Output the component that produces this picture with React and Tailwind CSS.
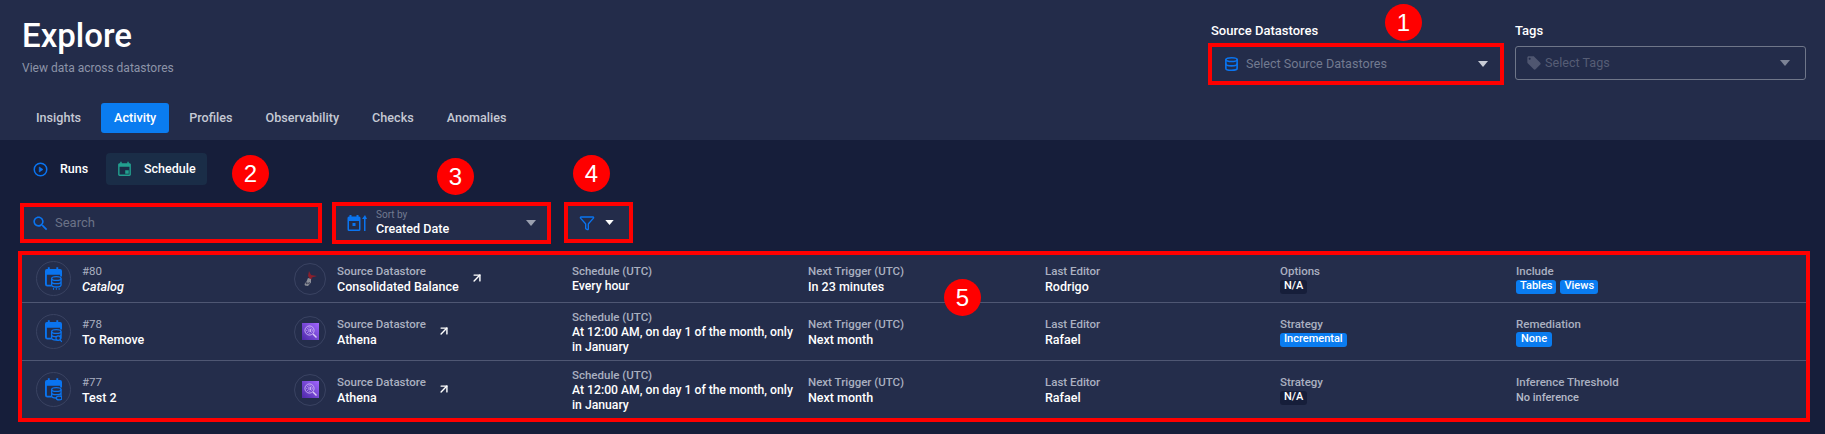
import { ArrowUpRight, Database, Funnel } from "lucide-react";

const tabs = ["Insights", "Activity", "Profiles", "Observability", "Checks", "Anomalies"];

const rows = [
  {
    id: "#80",
    name: "Catalog",
    italic: true,
    logo: "bird",
    store: "Consolidated Balance",
    schedule: "Every hour",
    next: "In 23 minutes",
    editor: "Rodrigo",
    optLabel: "Options",
    opts: [{ text: "N/A", dark: true }],
    lastLabel: "Include",
    last: ["Tables", "Views"],
    h: "h-[47px]",
    badge: "scan",
  },
  {
    id: "#78",
    name: "To Remove",
    logo: "athena",
    store: "Athena",
    schedule: "At 12:00 AM, on day 1 of the month, only in January",
    next: "Next month",
    editor: "Rafael",
    optLabel: "Strategy",
    opts: [{ text: "Incremental" }],
    lastLabel: "Remediation",
    last: ["None"],
    h: "h-[58px]",
    badge: "search",
  },
  {
    id: "#77",
    name: "Test 2",
    logo: "athena",
    store: "Athena",
    schedule: "At 12:00 AM, on day 1 of the month, only in January",
    next: "Next month",
    editor: "Rafael",
    optLabel: "Strategy",
    opts: [{ text: "N/A", dark: true }],
    lastLabel: "Inference Threshold",
    plain: "No inference",
    h: "h-[58px]",
    badge: "dot",
  },
];

function Caret({ className }) {
  return (
    <svg viewBox="0 0 10 6" className={className} fill="currentColor">
      <path d="M0 0h10L5 6z" />
    </svg>
  );
}

function CalendarDb({ badge }) {
  return (
    <svg viewBox="0 0 18 24" className="w-[17px] h-[23px] text-[#0a74f0]" fill="none">
      <path d="M3 0h2v2h7V0h2v2h2a2 2 0 0 1 2 2v4H0V4a2 2 0 0 1 2-2h1z" fill="currentColor" />
      <path d="M1 7v11a1.5 1.5 0 0 0 1.5 1.5H7" stroke="currentColor" strokeWidth="2" />
      <path d="M17 7v3" stroke="currentColor" strokeWidth="2" />
      <ellipse cx="12" cy="12" rx="5" ry="2" stroke="currentColor" strokeWidth="1.4" fill="#242d4b" />
      <path d="M7 12v7c0 1 2.2 2 5 2s5-1 5-2v-7M7 15.5c0 1 2.2 2 5 2s5-1 5-2" stroke="currentColor" strokeWidth="1.4" />
      {badge === "scan" && <path d="M9 22v2M12 22v2M15 22v2" stroke="currentColor" strokeWidth="1" />}
      {badge === "search" && (
        <g stroke="currentColor" strokeWidth="1.2" fill="#242d4b">
          <circle cx="14" cy="19" r="2.4" />
          <path d="M16 21l2 2" />
        </g>
      )}
      {badge === "dot" && <ellipse cx="15" cy="21" rx="3" ry="2" fill="#242d4b" stroke="currentColor" strokeWidth="1.4" />}
    </svg>
  );
}

function BirdLogo() {
  return (
    <svg viewBox="0 0 20 20" className="w-[20px] h-[20px]">
      <path d="M9 2l2 4 6 1-5 1.5-1 3-3-4.5z" fill="#8a1f2c" />
      <path d="M8 9l3 1v3.5L8 17l-3-.5-.5-1.5 2-2.5z" fill="#8c8f99" />
      <path d="M6.5 13L8 14l-1 1.5-1.5-1zM9 13l1 .5-1 2-1-1z" fill="#3d4257" />
    </svg>
  );
}

function AthenaLogo() {
  return (
    <div className="w-[17px] h-[17px] bg-gradient-to-tr from-[#4d27a8] to-[#a166ff] flex items-center justify-center">
      <svg viewBox="0 0 17 17" className="w-[17px] h-[17px]" fill="none" stroke="#d9c8f7" strokeWidth="0.8">
        <circle cx="7.5" cy="7.5" r="4.6" />
        <circle cx="7.5" cy="7.5" r="2.8" strokeDasharray="1 1" />
        <path d="M7 6v3M8.5 6v3" />
        <path d="M11 11l3.5 3.5" strokeWidth="1.4" />
      </svg>
    </div>
  );
}

function Field({ label, children, className = "" }) {
  return (
    <div className={className}>
      <div className="text-[11.5px] leading-[16px] font-medium text-[#aab0c0]">{label}</div>
      {children}
    </div>
  );
}

function Pill({ text, dark }) {
  const big = text === "None";
  return (
    <span
      className={`inline-flex items-center rounded-[3px] text-[11px] font-medium text-white ${
        big ? "h-[15px] px-[5px]" : "h-[14px] px-[4px]"
      } ${dark ? "bg-[#161e3a]" : "bg-[#0a7cf0]"}`}
    >
      {text}
    </span>
  );
}

function Marker({ n, className }) {
  return (
    <div
      className={`absolute w-[37px] h-[37px] rounded-full bg-[#f00] text-white flex items-center justify-center font-['Liberation_Sans',sans-serif] text-[24px] ${className}`}
    >
      {n}
    </div>
  );
}

function RedBox() {
  return <div className="absolute -inset-[4px] border-4 border-[#f00] pointer-events-none" />;
}

function Row({ row, first }) {
  const value = "text-[12.5px] leading-[16px] font-medium text-white";
  return (
    <div
      className={`${row.h} grid grid-cols-[258px_278px_236px_237px_235px_236px_1fr] items-center pl-[14px] ${
        first ? "" : "border-t border-[#4f5773]"
      }`}
    >
      <div className="flex items-center gap-[11px]">
        <div className="w-[35px] h-[35px] rounded-full border border-[#3a4362] flex items-center justify-center">
          <CalendarDb badge={row.badge} />
        </div>
        <div>
          <div className="text-[11.5px] leading-[16px] text-[#aab0c0]">{row.id}</div>
          <div className={`${value} ${row.italic ? "italic" : ""}`}>{row.name}</div>
        </div>
      </div>

      <div className="flex items-center gap-[11px]">
        <div className="w-[32px] h-[32px] rounded-full border border-[#3a4362] flex items-center justify-center">
          {row.logo === "bird" ? <BirdLogo /> : <AthenaLogo />}
        </div>
        <Field label="Source Datastore">
          <div className={value}>{row.store}</div>
        </Field>
        <ArrowUpRight className="w-[14px] h-[14px] text-white -mt-[2px]" strokeWidth={2.4} />
      </div>

      <Field label="Schedule (UTC)" className="w-[226px]">
        <div className="text-[12.2px] leading-[14.5px] font-medium text-white">{row.schedule}</div>
      </Field>
      <Field label="Next Trigger (UTC)">
        <div className={value}>{row.next}</div>
      </Field>
      <Field label="Last Editor">
        <div className={value}>{row.editor}</div>
      </Field>
      <Field label={row.optLabel}>
        <div className="flex gap-[4px] h-[16px] items-center">
          {row.opts.map((o) => (
            <Pill key={o.text} text={o.text} dark={o.dark} />
          ))}
        </div>
      </Field>
      <Field label={row.lastLabel}>
        {row.plain ? (
          <div className="text-[11px] leading-[16px] font-medium text-[#b4b9c7]">{row.plain}</div>
        ) : (
          <div className="flex gap-[4px] h-[16px] items-center">
            {row.last.map((t) => (
              <Pill key={t} text={t} />
            ))}
          </div>
        )}
      </Field>
    </div>
  );
}

export default function App() {
  return (
    <div className="relative min-h-[434px] bg-[#161e3a] font-['Roboto','Noto_Sans',sans-serif] overflow-hidden">
      {/* header */}
      <div className="h-[140px] bg-[#232c4a] px-[19px] relative">
        <div className="flex justify-between">
          <div className="pt-[16px] pl-[3px]">
            <h1 className="text-[33px] leading-[40px] font-medium text-white">Explore</h1>
            <p className="mt-[4px] text-[12px] leading-[16px] text-[#8d94a8]">View data across datastores</p>
          </div>
          <div className="flex gap-[13px] pt-[23px]">
            <div className="w-[292px]">
              <div className="text-[13px] leading-[16px] font-medium text-white pl-[1px]">Source Datastores</div>
              <div className="relative mt-[8px] h-[34px] mx-[2px] flex items-center px-[12px] bg-[#232c4a]">
                <Database className="w-[15px] h-[16px] text-[#0a74f0]" strokeWidth={2.6} />
                <span className="ml-[7px] text-[12.6px] text-[#727a90]">Select Source Datastores</span>
                <Caret className="ml-auto w-[10px] h-[6px] text-[#c8ccd6]" />
                <RedBox />
              </div>
            </div>
            <div className="w-[291px]">
              <div className="text-[13px] leading-[16px] font-medium text-white">Tags</div>
              <div className="mt-[7px] h-[34px] flex items-center pl-[10px] pr-[15px] border border-[#6f7689] rounded-[3px]">
                <svg viewBox="0 0 24 24" className="w-[16px] h-[16px] text-[#4f5670]" fill="currentColor">
                  <path d="M21.4 11.6l-9-9C12 2.2 11.5 2 11 2H4c-1.1 0-2 .9-2 2v7c0 .6.2 1.1.6 1.4l9 9c.4.4.9.6 1.4.6s1-.2 1.4-.6l7-7c.4-.4.6-.9.6-1.4s-.2-1-.6-1.4zM5.5 7C4.7 7 4 6.3 4 5.5S4.7 4 5.5 4 7 4.7 7 5.5 6.3 7 5.5 7z" />
                </svg>
                <span className="ml-[3px] text-[12.6px] text-[#565d75]">Select Tags</span>
                <Caret className="ml-auto w-[10px] h-[6px] text-[#7c8396]" />
              </div>
            </div>
          </div>
        </div>
        <div className="absolute left-[23px] top-[103px] flex gap-[7px]">
          {tabs.map((t) => (
            <div
              key={t}
              className={`h-[30px] px-[13px] flex items-center rounded-[3px] text-[12.6px] font-medium ${
                t === "Activity" ? "bg-[#0a7cf0] text-white" : "text-[#c5c9d4]"
              }`}
            >
              {t}
            </div>
          ))}
        </div>
      </div>

      {/* runs / schedule switch */}
      <div className="flex items-center pl-[33px] pt-[13px]">
        <div className="flex items-center gap-[12px] w-[73px]">
          <svg viewBox="0 0 24 24" className="w-[15px] h-[15px] text-[#0a74f0]" fill="none" stroke="currentColor" strokeWidth="2.4">
            <circle cx="12" cy="12" r="10" />
            <path d="M10 8l6 4-6 4z" fill="currentColor" strokeWidth="1" />
          </svg>
          <span className="text-[12.5px] font-medium text-white">Runs</span>
        </div>
        <div className="h-[32px] w-[101px] rounded-[4px] bg-[#1a2d47] flex items-center pl-[10px] gap-[11px]">
          <svg viewBox="0 0 24 24" className="w-[17px] h-[17px] text-[#22a08f]" fill="currentColor">
            <path d="M18 13h-5v5h5v-5zM16 1v2H8V1H6v2H5c-1.11 0-1.99.9-1.99 2L3 19c0 1.1.89 2 2 2h14c1.1 0 2-.9 2-2V5c0-1.1-.9-2-2-2h-1V1h-2zm3 18H5V8h14v11z" />
          </svg>
          <span className="text-[12.5px] font-medium text-white">Schedule</span>
        </div>
      </div>

      {/* search, sort, filter */}
      <div className="flex items-center pl-[24px] mt-[20px] h-[35px]">
        <div className="relative w-[294px] h-[33px] bg-[#232c4a] border-t border-[#4f5773] flex items-center pl-[7px]">
          <svg viewBox="0 0 24 24" className="w-[19px] h-[19px] text-[#0a74f0]" fill="currentColor">
            <path d="M15.5 14h-.79l-.28-.27C15.41 12.59 16 11.11 16 9.5 16 5.91 13.09 3 9.5 3S3 5.91 3 9.5 5.91 16 9.5 16c1.61 0 3.09-.59 4.23-1.57l.27.28v.79l5 4.99L20.49 19l-4.99-5zm-6 0C7.01 14 5 11.99 5 9.5S7.01 5 9.5 5 14 7.01 14 9.5 11.99 14 9.5 14z" />
          </svg>
          <span className="ml-[5px] text-[13px] text-[#6b7287]">Search</span>
          <RedBox />
        </div>
        <div className="relative ml-[18px] w-[211px] h-[35px] bg-[#232c4a] border-t border-[#4f5773] flex items-center px-[11px]">
          <svg viewBox="0 0 20 16" className="w-[20px] h-[16px] text-[#0a74f0]" fill="currentColor">
            <path d="M2.5 0h2v1.5h5V0h2v1.5H12a1.5 1.5 0 0 1 1.5 1.5v11.5A1.5 1.5 0 0 1 12 16H2a1.5 1.5 0 0 1-1.5-1.5V3A1.5 1.5 0 0 1 2 1.5h.5zM2 6v8.5h10V6zM5.5 8h3v3h-3z" fillRule="evenodd" />
            <path d="M17 16V4h-2l3-4 2 4h-1.5v12z" />
          </svg>
          <div className="ml-[9px]">
            <div className="text-[10px] leading-[12px] text-[#727a90]">Sort by</div>
            <div className="text-[12.6px] leading-[16px] font-medium text-white">Created Date</div>
          </div>
          <Caret className="ml-auto w-[10px] h-[6px] text-[#9aa0b0]" />
          <RedBox />
        </div>
        <div className="relative ml-[21px] w-[61px] h-[33px] bg-[#232c4a] flex items-center pl-[11px]">
          <Funnel className="w-[16px] h-[16px] text-[#0a74f0]" strokeWidth={2} />
          <Caret className="ml-[10px] w-[9px] h-[5px] text-white" />
          <RedBox />
        </div>
      </div>

      {/* schedule list */}
      <div className="relative ml-[22px] mr-[19px] mt-[15px] bg-[#242d4b]">
        {rows.map((row, i) => (
          <Row key={row.id} row={row} first={i === 0} />
        ))}
        <RedBox />
      </div>

      <Marker n="1" className="left-[1385px] top-[4px]" />
      <Marker n="2" className="left-[232px] top-[155px]" />
      <Marker n="3" className="left-[437px] top-[158px]" />
      <Marker n="4" className="left-[573px] top-[155px]" />
      <Marker n="5" className="left-[944px] top-[279px]" />
    </div>
  );
}
